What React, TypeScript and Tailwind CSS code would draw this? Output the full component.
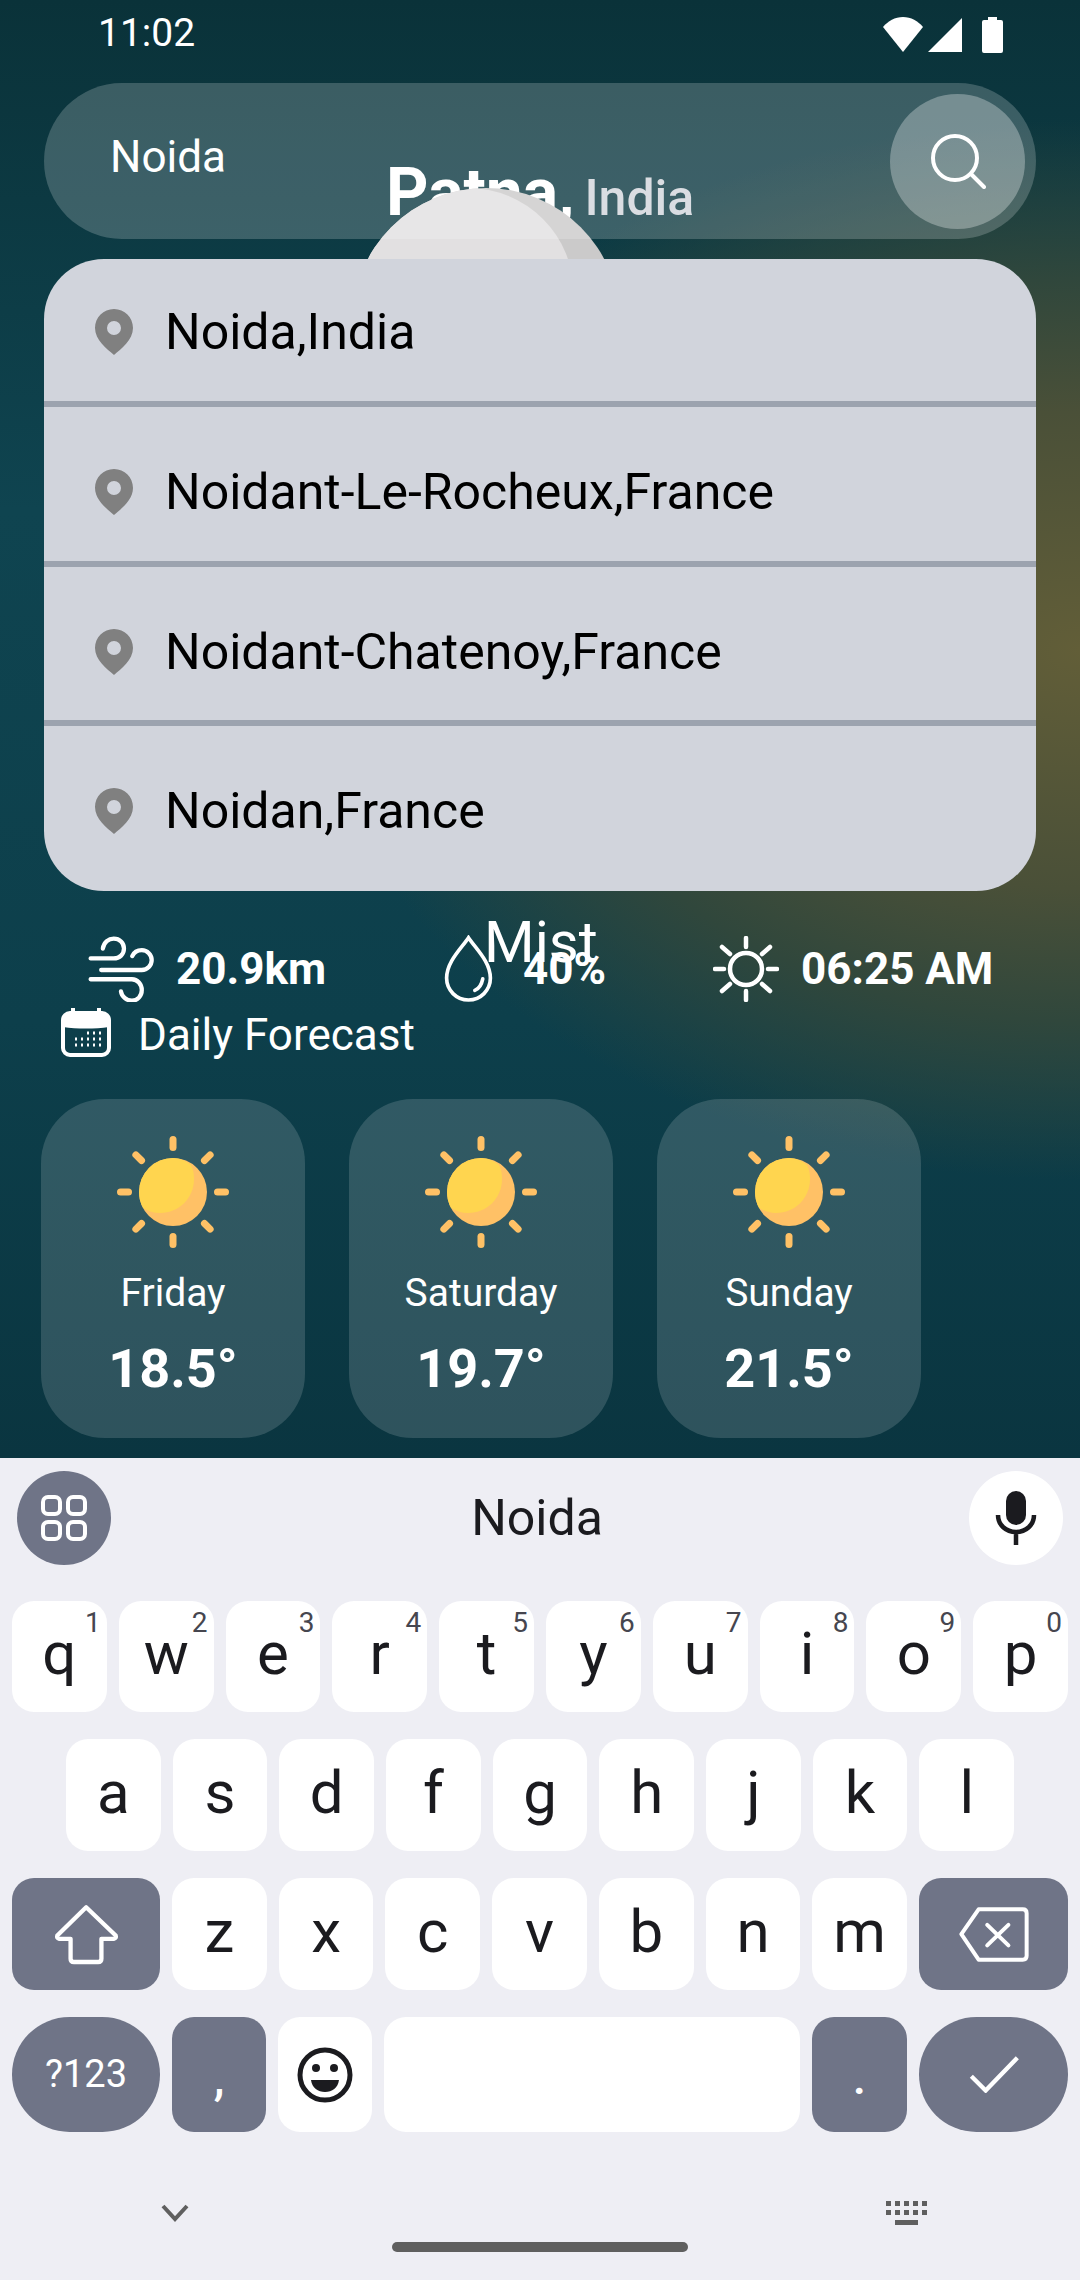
const rows = ["Noida,India", "Noidant-Le-Rocheux,France", "Noidant-Chatenoy,France", "Noidan,France"];
const days = [
  { day: "Friday", temp: "18.5°" },
  { day: "Saturday", temp: "19.7°" },
  { day: "Sunday", temp: "21.5°" },
];
const topKeys = [["q", "1"], ["w", "2"], ["e", "3"], ["r", "4"], ["t", "5"], ["y", "6"], ["u", "7"], ["i", "8"], ["o", "9"], ["p", "0"]];

const SunDay = () => (
  <svg width="114" height="114" viewBox="0 0 114 114">
    {[0, 45, 90, 135, 180, 225, 270, 315].map((a) => (
      <rect key={a} x="53.5" y="1" width="7" height="15" rx="3.5" fill="#ffc166" transform={`rotate(${a} 57 57)`} />
    ))}
    <circle cx="57" cy="57" r="34" fill="#ffc166" />
    <path d="M57 23a34 34 0 0 0-34 34c0 6 1.500 11 4 16 5 3 11 5 17 5 19 0 34-15 34-34 0-6-1-10-3-14-5-4-11-7-18-7z" fill="#ffd54f" />
  </svg>
);

const Pin = () => (
  <svg width="40" height="48" viewBox="0 0 40 48" className="shrink-0">
    <path fillRule="evenodd" d="M20 1C9.500 1 1 9.500 1 20c0 12 12 21 19 27 7-6 19-15 19-27C39 9.500 30.500 1 20 1zm0 12a7 7 0 1 1 0 14 7 7 0 0 1 0-14z" fill="#808080" />
  </svg>
);

const Key = ({ label, sup }: { label: string; sup?: string }) => (
  <div className="relative flex-1 h-full bg-white rounded-[22px] flex items-center justify-center pb-[5px] text-[60px] leading-[70px] text-[#1b1b1f]">
    {label}
    {sup && <span className="absolute right-[6px] top-[6px] text-[28px] leading-[32px] text-[#46464f]">{sup}</span>}
  </div>
);

const GrayKey = ({ className, children }: { className: string; children: React.ReactNode }) => (
  <div className={`h-full bg-[#6f7487] flex items-center justify-center text-white ${className}`}>{children}</div>
);

export default function App() {
  return (
    <div className="w-[1080px] h-[2280px] overflow-hidden flex flex-col font-[Roboto,sans-serif]">
      <div className="relative h-[1458px] bg-[radial-gradient(ellipse_770px_530px_at_1080px_650px,#625e38_0%,#4a5038_45%,#30473c_70%,rgba(15,60,70,0)_100%),linear-gradient(180deg,#0a3239_0%,#0f4450_35%,#0d3f4b_70%,#0a3540_100%)]">
        <div className="h-[66px] pl-[98px] pr-[77px] flex items-center justify-between text-white text-[39px]">
          <span>11:02</span>
          <div className="flex items-center mt-[3px]">
            <svg width="40" height="35" viewBox="0 0 40 35"><path d="M20 35 0 10C5 4 12 0 20 0s15 4 20 10z" fill="#fff" /></svg>
            <svg width="34" height="34" viewBox="0 0 34 34" className="ml-[5px]"><path d="M34 0v34H0z" fill="#fff" /></svg>
            <svg width="21" height="36" viewBox="0 0 21 36" className="ml-[20px]"><path d="M6 0h9v3h4a2 2 0 0 1 2 2v29a2 2 0 0 1-2 2H2a2 2 0 0 1-2-2V5a2 2 0 0 1 2-2h4z" fill="#fff" /></svg>
          </div>
        </div>

        <div className="absolute left-[386px] top-[154px] flex items-baseline text-white leading-[78px]">
          <span className="text-[66px] font-bold">Patna,</span>
          <span className="ml-[10px] text-[50px] font-medium text-[#d1d5db]">India</span>
        </div>
        <div className="absolute left-[352px] top-[188px] w-[268px] h-[268px] rounded-full bg-[#cbcaca] overflow-hidden">
          <div className="ml-[10px] w-[212px] h-[212px] rounded-full bg-[#e2e0e1]" />
        </div>

        <div className="relative mt-[17px] mx-[44px] h-[156px] rounded-full bg-white/20 flex items-center justify-between pl-[66px] pr-[11px]">
          <span className="text-white text-[44px] -mt-[8px]">Noida</span>
          <div className="w-[135px] h-[135px] rounded-full bg-white/30 flex items-center justify-center">
            <svg width="56" height="56" viewBox="0 0 56 56" fill="none" stroke="#fff" strokeWidth="4" strokeLinecap="round">
              <circle cx="25" cy="25" r="22" />
              <path d="M41 41l13 13" />
            </svg>
          </div>
        </div>

        <div className="relative mt-[20px] mx-[44px] h-[632px] rounded-[60px] bg-[#d1d4dc] overflow-hidden flex flex-col">
          {rows.map((r, i) => (
            <div
              key={r}
              className={`flex gap-[31px] pl-[50px] text-[50px] leading-[48px] text-black ${i === 0 ? "h-[148px] pt-[49px]" : "pt-[61px]"} ${i === 1 || i === 2 ? "h-[159.5px]" : ""} ${i < 3 ? "border-b-[6px] border-[#9ca3af]" : ""}`}
            >
              <Pin />
              <span>{r}</span>
            </div>
          ))}
        </div>

        <div className="relative mt-[42px] h-[72px] flex items-center text-white text-[44px] font-bold">
          <div className="flex items-center w-[355px] pl-[88px] gap-[22px]">
            <svg width="66" height="66" viewBox="52 67 200 200" fill="none" stroke="#fff" strokeWidth="13" strokeLinecap="round">
              <path d="M97 105C100 85 115 75 130 75c18 0 31 13 31 30s-13 30-31 30H60" />
              <path d="M92 170H215c17 0 30-14 30-30s-13-30-30-30c-13 0-24 7-29 18" />
              <path d="M60 198H185c17 0 30 15 30 33s-13 32-30 32-31-13-33-28" />
            </svg>
            <span>20.9km</span>
          </div>
          <div className="flex items-center w-[270px] pl-[88px] gap-[29px]">
            <svg width="51" height="68" viewBox="65 95 152 205" fill="none" stroke="#fff" strokeWidth="11" strokeLinecap="round">
              <path d="M141 103C120 135 75 175 75 225a66 66 0 0 0 132 0C207 175 162 135 141 103z" />
              <path d="M160 262c12-5 20-15 24-35" />
            </svg>
            <span>40%</span>
          </div>
          <div className="flex items-center pl-[88px] gap-[22px]">
            <svg width="66" height="66" viewBox="0 0 66 66" fill="none" stroke="#fff" strokeWidth="4.500" strokeLinecap="round">
              <circle cx="33" cy="33" r="16" />
              <path d="M33 2v9M33 55v9M2 33h9M55 33h9M9 11l8 7M57 11l-8 7M9 55l8-7M57 55l-8-7" />
            </svg>
            <span>06:25 AM</span>
          </div>
          <span className="absolute left-[484px] top-[-25px] text-[58px] leading-[68px] font-normal">Mist</span>
        </div>

        <div className="-mt-[2px] ml-[61px] flex items-center gap-[27px] text-white text-[44px] leading-[52px]">
          <svg width="50" height="50" viewBox="0 0 50 50" fill="none">
            <rect x="2" y="6" width="46" height="42" rx="7" stroke="#fff" strokeWidth="4" />
            <path d="M2 13a7 7 0 0 1 7-7h32a7 7 0 0 1 7 7v7c-14 2-32 2-46 0z" fill="#fff" />
            <path d="M12 1v7M38 1v7" stroke="#fff" strokeWidth="4" />
            <path d="M26 26h2M32 26h2M38 26h2M14 32h2M20 32h2M26 32h2M32 32h2M38 32h2M14 38h2M20 38h2M26 38h2M32 38h2M38 38h2" stroke="#fff" strokeWidth="3" />
          </svg>
          <span className="pt-[6px]">Daily Forecast</span>
        </div>

        <div className="mt-[38px] ml-[41px] flex gap-[44px]">
          {days.map((d) => (
            <div key={d.day} className="w-[264px] h-[339px] rounded-[64px] bg-white/15 flex flex-col items-center pt-[36px] text-white">
              <SunDay />
              <span className="mt-[22px] text-[39px] leading-[44px]">{d.day}</span>
              <span className="mt-[24px] text-[54px] leading-[60px] font-bold">{d.temp}</span>
            </div>
          ))}
        </div>
      </div>

      <div className="flex-1 bg-[#eeeef4] flex flex-col relative">
        <div className="mt-[13px] mx-[17px] h-[94px] flex items-center justify-between">
          <div className="w-[94px] h-[94px] rounded-full bg-[#6f7487] flex items-center justify-center">
            <svg width="46" height="46" viewBox="0 0 46 46" fill="none" stroke="#fff" strokeWidth="4">
              <rect x="2" y="2" width="17" height="17" rx="5" />
              <rect x="27" y="2" width="17" height="17" rx="5" />
              <rect x="2" y="27" width="17" height="17" rx="5" />
              <rect x="27" y="27" width="17" height="17" rx="5" />
            </svg>
          </div>
          <span className="mr-[6px] text-[50px] text-[#1b1b1f]">Noida</span>
          <div className="w-[94px] h-[94px] rounded-full bg-white flex items-center justify-center">
            <svg width="44" height="54" viewBox="0 0 44 54" fill="none">
              <rect x="12" y="0" width="20" height="34" rx="10" fill="#1b1b1f" />
              <path d="M4 24c0 10 8 17 18 17s18-7 18-17M22 41v13" stroke="#1b1b1f" strokeWidth="4.500" />
            </svg>
          </div>
        </div>

        <div className="mt-[36px] mx-[12px] h-[111px] flex gap-[12px]">
          {topKeys.map(([k, s]) => <Key key={k} label={k} sup={s} />)}
        </div>
        <div className="mt-[27px] mx-[66px] h-[112px] flex gap-[12px]">
          {"asdfghjkl".split("").map((k) => <Key key={k} label={k} />)}
        </div>
        <div className="mt-[27px] mx-[12px] h-[112px] flex gap-[12px]">
          <GrayKey className="w-[148px] rounded-[22px]">
            <svg width="65" height="63" viewBox="160 125 196 188" fill="none" stroke="#fff" strokeWidth="13" strokeLinejoin="round">
              <path d="M257 137 170 222q-3 8 6 10H210V292q0 10 10 10H293q10 0 10-10V232H340q9-2 6-10z" />
            </svg>
          </GrayKey>
          {"zxcvbnm".split("").map((k) => <Key key={k} label={k} />)}
          <GrayKey className="w-[149px] rounded-[22px]">
            <svg width="72" height="57" viewBox="170 143 217 172" fill="none" stroke="#fff" strokeWidth="12" strokeLinejoin="round" strokeLinecap="round">
              <path d="M232 153H365q12 0 12 12V293q0 12-12 12H232L180 228z" />
              <path d="M258 200 322 262M322 200 258 262" />
            </svg>
          </GrayKey>
        </div>
        <div className="mt-[27px] mx-[12px] h-[115px] flex gap-[12px]">
          <GrayKey className="w-[148px] rounded-full text-[38px]">?123</GrayKey>
          <GrayKey className="w-[94px] rounded-[22px] text-[48px] leading-[56px] font-medium pt-[7px]">,</GrayKey>
          <div className="w-[94px] h-full bg-white rounded-[22px] flex items-center justify-center">
            <svg width="56" height="56" viewBox="0 0 56 56" fill="none">
              <circle cx="28" cy="28" r="25" stroke="#1b1b1f" strokeWidth="5" />
              <circle cx="19" cy="21" r="4" fill="#1b1b1f" />
              <circle cx="37" cy="21" r="4" fill="#1b1b1f" />
              <path d="M14 33h28c-1 8-7 12-14 12s-13-4-14-12z" fill="#1b1b1f" />
            </svg>
          </div>
          <div className="w-[416px] h-full bg-white rounded-[22px]" />
          <GrayKey className="w-[95px] rounded-[22px] text-[48px] leading-[56px] font-medium pt-[7px]">.</GrayKey>
          <GrayKey className="w-[149px] rounded-full">
            <svg width="50" height="37" viewBox="205 590 150 110" fill="none" stroke="#fff" strokeWidth="13">
              <path d="M212 650 255 693 350 595" />
            </svg>
          </GrayKey>
        </div>

        <div className="mt-[68px] pl-[161px] pr-[152px] h-[26px] flex items-center justify-between">
          <svg width="28" height="18" viewBox="0 0 28 18" fill="none" stroke="#5f5f5f" strokeWidth="4"><path d="M2 2l12 13L26 2" /></svg>
          <svg width="42" height="24" viewBox="0 0 42 24" fill="#5f5f5f">
            {[0, 9, 18, 27, 36].map((x) => (<rect key={x} x={x} y="0" width="5" height="5" />))}
            {[0, 9, 18, 27, 36].map((x) => (<rect key={x} x={x} y="9" width="5" height="5" />))}
            <rect x="9" y="19" width="23" height="5" />
          </svg>
        </div>
        <div className="absolute left-[392px] bottom-[28px] w-[296px] h-[10px] rounded-full bg-[#5f5f5f]" />
      </div>
    </div>
  );
}
